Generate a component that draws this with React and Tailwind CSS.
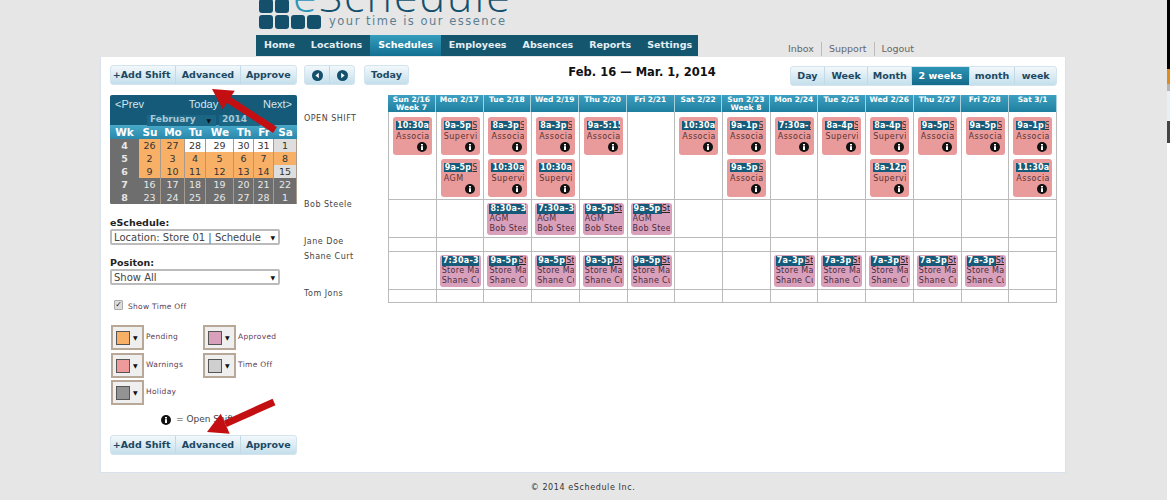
import React from 'react';

const days = ['Sun 2/16', 'Mon 2/17', 'Tue 2/18', 'Wed 2/19', 'Thu 2/20', 'Fri 2/21', 'Sat 2/22', 'Sun 2/23', 'Mon 2/24', 'Tue 2/25', 'Wed 2/26', 'Thu 2/27', 'Fri 2/28', 'Sat 3/1'];

const open1 = [['10:30a', 'Associate'], ['9a-5p', 'Supervisor'], ['8a-3p', 'Associate'], ['8a-3p', 'Associate'], ['9a-5:15', 'Associate'], null, ['10:30a', 'Associate'], ['9a-1p', 'Associate'], ['7:30a-', 'Associate'], ['8a-4p', 'Supervisor'], ['8a-4p', 'Supervisor'], ['9a-5p', 'Associate'], ['9a-5p', 'Associate'], ['9a-1p', 'Associate']];
const open2 = [null, ['9a-5p', 'AGM'], ['10:30a', 'Supervisor'], ['10:30a', 'Supervisor'], null, null, null, ['9a-5p', 'Associate'], null, null, ['8a-12p', 'Supervisor'], null, null, ['11:30a', 'Associate']];

const bob = [null, null, '8:30a-3:', '7:30a-3:', '9a-5p', '9a-5p', null, null, null, null, null, null, null, null];
const shane = [null, '7:30a-3:', '9a-5p', '9a-5p', '9a-5p', '9a-5p', null, null, '7a-3p', '7a-3p', '7a-3p', '7a-3p', '7a-3p', null];

const calRows = [
  ['4', ['26', 'o'], ['27', 'o'], ['28', 'w'], ['29', 'w'], ['30', 'w'], ['31', 'w'], ['1', 'l']],
  ['5', ['2', 'o'], ['3', 'o'], ['4', 'o'], ['5', 'o'], ['6', 'o'], ['7', 'o'], ['8', 'o']],
  ['6', ['9', 'o'], ['10', 'o'], ['11', 'o'], ['12', 'o'], ['13', 'o'], ['14', 'o'], ['15', 'l']],
  ['7', ['16', 'g'], ['17', 'g'], ['18', 'g'], ['19', 'g'], ['20', 'g'], ['21', 'g'], ['22', 'g']],
  ['8', ['23', 'g'], ['24', 'g'], ['25', 'g'], ['26', 'g'], ['27', 'g'], ['28', 'g'], ['1', 'g']],
];

const calColors = {
  o: 'bg-[#f7b066] text-[#333]',
  w: 'bg-white text-[#333]',
  l: 'bg-[#dedede] text-[#333]',
  g: 'bg-[#6e6e6e] text-[#e8e8e8]',
};

function InfoIcon({ size = 10 }) {
  return (
    <svg width={size} height={size} viewBox="0 0 10 10" className="block shrink-0">
      <circle cx="5" cy="5" r="5" fill="#111" />
      <rect x="4" y="4.2" width="2" height="3.8" fill="#fff" />
      <rect x="4" y="2" width="2" height="1.5" fill="#fff" />
    </svg>
  );
}

function Arrow({ x1, y1, x2, y2, hx, hy, hw }) {
  const dx = x2 - x1;
  const dy = y2 - y1;
  const len = Math.sqrt(dx * dx + dy * dy);
  const ux = dx / len;
  const uy = dy / len;
  const bx = x2 - ux * hx;
  const by = y2 - uy * hx;
  const px = -uy * hw;
  const py = ux * hw;
  return (
    <g>
      <line x1={x1} y1={y1} x2={bx} y2={by} stroke="#c40f12" strokeWidth={hy} />
      <polygon points={`${x2},${y2} ${bx + px},${by + py} ${bx - px},${by - py}`} fill="#c40f12" />
    </g>
  );
}

function ToolButton({ children, active, className = '' }) {
  return (
    <div
      className={`flex items-center justify-center h-full whitespace-nowrap border-r border-[#c3dae6] last:border-r-0 ${
        active ? 'bg-gradient-to-b from-[#2d95b5] to-[#146a8a] text-white' : 'text-[#1d4861]'
      } ${className}`}
    >
      {children}
    </div>
  );
}

function ButtonGroup({ children, className = '' }) {
  return (
    <div className={`flex h-[20px] rounded-[3px] border border-[#d3e4ee] bg-gradient-to-b from-[#f2f8fb] to-[#c4dfec] overflow-hidden text-[9.5px] font-bold ${className}`}>
      {children}
    </div>
  );
}

function ShiftButtons() {
  return (
    <ButtonGroup className="w-[187px]">
      <ToolButton className="w-[66px] pr-[3px]">+Add Shift</ToolButton>
      <ToolButton className="w-[65px]">Advanced</ToolButton>
      <ToolButton className="w-[56px]">Approve</ToolButton>
    </ButtonGroup>
  );
}

function OpenCard({ shift }) {
  return (
    <div className="relative w-[39px] h-[38px] rounded-[3px] bg-[#e99a9a] pt-[4px] px-[3px] whitespace-nowrap">
      <div className="flex h-[9px] leading-[9px] overflow-hidden">
        <span className="shrink-0 bg-[#155a78] text-white font-bold text-[8px] tracking-[0.2px] px-[1px]">{shift[0]}</span>
        <span className="text-[#333] underline text-[8px]">St</span>
      </div>
      <div className="text-[8px] tracking-[0.5px] leading-[11px] mt-[1px] text-[#5a3434] overflow-hidden">{shift[1]}</div>
      <div className="absolute right-[5px] bottom-[3px]">
        <InfoIcon />
      </div>
    </div>
  );
}

function StaffCard({ time, role, name }) {
  return (
    <div className="w-[41px] h-[32px] rounded-[3px] bg-[#d8a0bb] pt-[1px] px-[2px] whitespace-nowrap text-[8px] tracking-[0.3px] leading-[10px] text-[#4c2c3c]">
      <div className="flex h-[10px] overflow-hidden">
        <span className="shrink-0 bg-[#155a78] text-white font-bold px-[1px]">{time}</span>
        <span className="underline text-[#222]">St</span>
      </div>
      <div className="overflow-hidden">{role}</div>
      <div className="overflow-hidden">{name}</div>
    </div>
  );
}

function Row({ label, height, labelClass = '', children }) {
  return (
    <div className="flex">
      <div className={`w-[84px] text-[8px] leading-[10px] tracking-[0.5px] text-[#444] ${labelClass}`}>{label}</div>
      <div className={`flex-1 grid grid-cols-14 border-b border-l border-[#bbb] ${height}`}>{children}</div>
    </div>
  );
}

function Cell({ children, className = '' }) {
  return <div className={`border-r border-[#bbb] min-w-0 ${className}`}>{children}</div>;
}

function ColorPick({ color, label, className = '' }) {
  return (
    <div className={`flex items-start ${className}`}>
      <div className="flex items-center w-[33px] h-[25px] border-2 border-[#b8a898] bg-[#efefef] pl-[3px] gap-[3px]">
        <div className={`w-[14px] h-[14px] border border-[#555] ${color}`} />
        <span className="text-[6px] text-[#111]">▼</span>
      </div>
      <span className="ml-[2px] mt-[6px] text-[7.5px] tracking-[0.3px] text-[#5b3c55]">{label}</span>
    </div>
  );
}

function SelectBox({ children }) {
  return (
    <div className="flex items-center justify-between w-[170px] h-[16px] border-2 border-[#bbb] rounded-[2px] bg-white pl-[2px] pr-[3px] text-[10px] text-[#444] whitespace-nowrap">
      <span>{children}</span>
      <span className="text-[6px] text-[#111]">▼</span>
    </div>
  );
}

function CircleArrow({ dir }) {
  return (
    <svg width="11" height="11" viewBox="0 0 11 11">
      <circle cx="5.5" cy="5.5" r="5.5" fill="#13506e" />
      <polygon points={dir === 'left' ? '6.8,2.8 6.8,8.2 3.4,5.5' : '4.2,2.8 4.2,8.2 7.6,5.5'} fill="#fff" />
    </svg>
  );
}

export default function App() {
  return (
    <div className="relative w-[1170px] h-[500px] overflow-hidden bg-[#e6e6e6] font-['DejaVu_Sans',sans-serif]">
      {/* logo + nav */}
      <div className="pl-[256px] h-[57px] flex flex-col">
        <div className="h-[35px] overflow-hidden flex flex-col justify-end pl-[3px] pb-[6px]">
          <div className="flex shrink-0 items-end gap-[8px]">
            <div className="flex gap-[2px] w-[62px] flex-wrap">
              <div className="w-[14px] h-[14px] rounded-[3px] bg-[#14506c]" />
              <div className="w-[14px] h-[14px] rounded-[3px] bg-[#14506c]" />
              <div className="w-[30px] h-[14px]" />
              <div className="w-[14px] h-[14px] rounded-[3px] bg-[#14506c]" />
              <div className="w-[14px] h-[14px] rounded-[3px] bg-[#14506c]" />
              <div className="w-[14px] h-[14px] rounded-[3px] bg-[#14506c]" />
              <div className="w-[14px] h-[14px] rounded-[3px] bg-[#14506c]" />
            </div>
            <div className="-ml-[36px] mb-[1px]">
              <div className="h-[14px] flex items-end font-['Open_Sans',sans-serif] font-light text-[43px] leading-[36px] tracking-[2px] text-[#14506c] whitespace-nowrap">
                <span className="text-[#2b93b8]">e</span>Schedule
              </div>
              <div className="pl-[36px] text-[11.5px] tracking-[1.5px] leading-[14px] text-[#5b7f92] whitespace-nowrap">your time is our essence</div>
            </div>
          </div>
        </div>
        <div className="flex items-end">
          <div className="flex h-[21px] w-[442px] bg-[#15566f] text-[9.5px] font-bold text-[#e4eff4] items-center whitespace-nowrap">
            <span className="px-[8px]">Home</span>
            <span className="px-[8px]">Locations</span>
            <span className="px-[8px] h-full flex items-center bg-gradient-to-b from-[#359dbd] to-[#127092] text-white">Schedules</span>
            <span className="px-[8px]">Employees</span>
            <span className="px-[8px]">Absences</span>
            <span className="px-[8px]">Reports</span>
            <span className="px-[8px]">Settings</span>
          </div>
          <div className="ml-[90px] flex gap-[7px] text-[9.5px] text-[#666] whitespace-nowrap">
            <span className="pr-[7px] border-r border-[#bbb]">Inbox</span>
            <span className="pr-[7px] border-r border-[#bbb]">Support</span>
            <span>Logout</span>
          </div>
        </div>
      </div>

      {/* main panel */}
      <div className="ml-[100px] w-[966px] h-[416px] bg-white border-x border-b border-[#d9e2ea] flex pl-[9px] pt-[8px]">
        <div className="w-[187px] shrink-0">
          <ShiftButtons />
          <div className="mt-[10px] w-[187px] h-[109px] bg-[#155a78] rounded-[2px] overflow-hidden">
            <div className="h-[30px] relative">
              <div className="flex justify-between px-[5px] pt-[1px] font-['Liberation_Sans',sans-serif] text-[11px] text-[#d3e6ef]">
                <span>&lt;Prev</span>
                <span>Today</span>
                <span>Next&gt;</span>
              </div>
              <div className="flex mt-[2px] pl-[37px] gap-[3px] text-[9px] font-bold text-[#a9c8d6]">
                <div className="flex justify-between items-center w-[69px] h-[11px] bg-[#1a6684] pl-[3px] pr-[5px]">
                  <span>February</span>
                  <span className="text-[6px] text-[#111]">▼</span>
                </div>
                <div className="w-[41px] h-[11px] flex items-center bg-[#1a6684] pl-[3px]">2014</div>
              </div>
            </div>
            <div className="grid grid-cols-[29px_22px_24px_21px_28px_20px_20px_23px] h-[14px] bg-gradient-to-b from-[#48a9c9] to-[#2a89ab] text-white font-bold text-[10.5px] text-center leading-[14px]">
              {['Wk', 'Su', 'Mo', 'Tu', 'We', 'Th', 'Fr', 'Sa'].map((d) => (
                <div key={d}>{d}</div>
              ))}
            </div>
            <div className="bg-[#6e6e6e]">
              {calRows.map((r) => (
                <div key={r[0]} className="grid grid-cols-[29px_22px_24px_21px_28px_20px_20px_23px] h-[13px] text-[9.5px] leading-[13px] text-center">
                  <div className="text-[#e8e8e8] font-bold">{r[0]}</div>
                  {r.slice(1).map((c, i) => (
                    <div key={i} className={`border-r border-b border-[#a89a8c] ${calColors[c[1]]}`}>{c[0]}</div>
                  ))}
                </div>
              ))}
            </div>
          </div>

          <div className="mt-[12px] text-[9.5px] font-bold leading-[13px] text-[#222]">eSchedule:</div>
          <SelectBox>Location: Store 01 | Schedule</SelectBox>
          <div className="mt-[11px] text-[9.5px] font-bold leading-[13px] text-[#222]">Positon:</div>
          <SelectBox>Show All</SelectBox>

          <div className="flex items-end mt-[15px] pl-[4px] gap-[5px]">
            <div className="w-[9px] h-[10px] rounded-[1px] bg-[#ddd] border border-[#aaa] text-[8px] leading-[8px] text-[#222] text-center mb-[2px]">✓</div>
            <span className="text-[7.5px] tracking-[0.3px] text-[#5b3c55]">Show Time Off</span>
          </div>

          <div className="mt-[13px] pl-[1px] flex">
            <ColorPick color="bg-[#f7b066]" label="Pending" className="w-[92px]" />
            <ColorPick color="bg-[#d8a0bb]" label="Approved" />
          </div>
          <div className="mt-[3px] pl-[1px] flex">
            <ColorPick color="bg-[#ee9a9a]" label="Warnings" className="w-[92px]" />
            <ColorPick color="bg-[#cfcfcf]" label="Time Off" />
          </div>
          <div className="mt-[2px] pl-[1px] flex">
            <ColorPick color="bg-[#939393]" label="Holiday" />
          </div>

          <div className="flex items-center mt-[10px] pl-[51px] gap-[5px] text-[9px] text-[#444] h-[10px] whitespace-nowrap">
            <InfoIcon />
            <span>= Open Shift</span>
          </div>
          <div className="mt-[10px]">
            <ShiftButtons />
          </div>
        </div>

        <div className="ml-[7px] w-[753px]">
          <div className="flex h-[20px]">
            <ButtonGroup className="w-[51px]">
              <ToolButton className="w-[26px]"><CircleArrow dir="left" /></ToolButton>
              <ToolButton className="w-[25px]"><CircleArrow dir="right" /></ToolButton>
            </ButtonGroup>
            <ButtonGroup className="ml-[9px] w-[45px]">
              <ToolButton className="w-full">Today</ToolButton>
            </ButtonGroup>
            <div className="ml-[158px] w-[150px] text-center text-[11.5px] font-bold leading-[14px] text-[#111] whitespace-nowrap">Feb. 16 — Mar. 1, 2014</div>
            <ButtonGroup className="ml-[73px] w-[267px] mt-[1px]">
              <ToolButton className="w-[34px]">Day</ToolButton>
              <ToolButton className="w-[44px]">Week</ToolButton>
              <ToolButton className="w-[44px]">Month</ToolButton>
              <ToolButton active className="w-[58px]">2 weeks</ToolButton>
              <ToolButton className="w-[46px]">month</ToolButton>
              <ToolButton className="w-[41px]">week</ToolButton>
            </ButtonGroup>
          </div>

          {/* schedule grid */}
          <div className="mt-[10px] w-[753px]">
            <div className="flex">
              <div className="w-[84px]" />
              <div className="flex-1 grid grid-cols-14 h-[17px] bg-gradient-to-b from-[#3da0c1] to-[#1f7f9f] text-white text-[7.5px] font-bold text-center leading-[8px]">
                {days.map((d, i) => (
                  <div key={d} className="border-r border-[#a9d0de] pt-[1px]">
                    {d}
                    {i === 0 && <div>Week 7</div>}
                    {i === 7 && <div>Week 8</div>}
                  </div>
                ))}
              </div>
            </div>
            <Row label="OPEN SHIFT" height="h-[88px]" labelClass="pt-[2px]">
              {days.map((d, i) => (
                <Cell key={d} className="pt-[5px] pl-[4px] flex flex-col gap-[4px]">
                  {open1[i] && <OpenCard shift={open1[i]} />}
                  {open2[i] && <OpenCard shift={open2[i]} />}
                </Cell>
              ))}
            </Row>
            <Row label="Bob Steele" height="h-[38px]">
              {days.map((d, i) => (
                <Cell key={d} className="pt-[3px] pl-[3px]">
                  {bob[i] && <StaffCard time={bob[i]} role="AGM" name="Bob Steele" />}
                </Cell>
              ))}
            </Row>
            <Row label="Jane Doe" height="h-[14px]" labelClass="-mt-[1px]">
              {days.map((d) => (
                <Cell key={d} />
              ))}
            </Row>
            <Row label="Shane Curt" height="h-[38px]">
              {days.map((d, i) => (
                <Cell key={d} className="pt-[3px] pl-[3px]">
                  {shane[i] && <StaffCard time={shane[i]} role="Store Manager" name="Shane Curt" />}
                </Cell>
              ))}
            </Row>
            <Row label="Tom Jons" height="h-[13px]" labelClass="-mt-[1px]">
              {days.map((d) => (
                <Cell key={d} />
              ))}
            </Row>
          </div>
        </div>
      </div>

      <div className="pt-[9px] ml-[100px] w-[966px] text-center text-[8px] tracking-[0.6px] text-[#333]">© 2014 eSchedule Inc.</div>

      {/* red annotation arrows */}
      <svg className="absolute left-0 top-0 pointer-events-none" width="1170" height="500">
        <Arrow x1={275} y1={130} x2={212} y2={89} hx={20} hy={7} hw={11} />
        <Arrow x1={274} y1={402} x2={207} y2={432} hx={20} hy={7} hw={11} />
      </svg>

      {/* sliver of another window at the right edge */}
      <div className="absolute right-0 top-0 w-[3px] h-[500px] flex flex-col">
        <div className="h-[69px] bg-black" />
        <div className="h-[15px] bg-[#e08a20]" />
        <div className="h-[7px] bg-[#b5b5b5]" />
        <div className="h-[30px] bg-[#e8eef6]" />
        <div className="h-[22px] bg-[#444]" />
        <div className="flex-1 bg-white" />
      </div>
    </div>
  );
}
